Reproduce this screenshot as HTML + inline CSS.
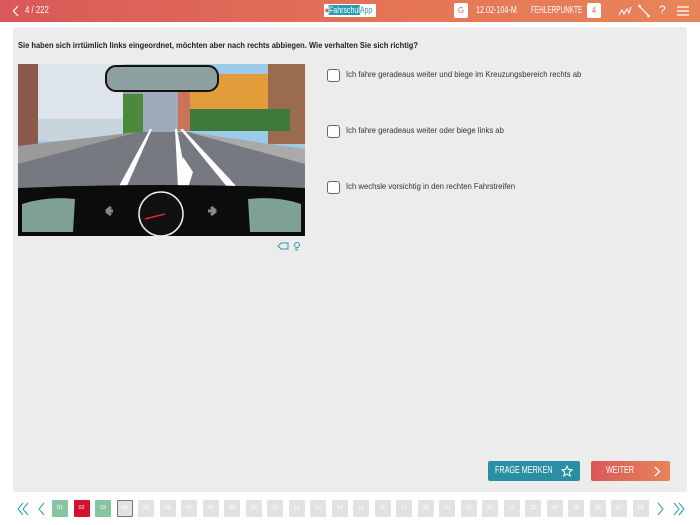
<!DOCTYPE html>
<html><head><meta charset="utf-8"><style>
*{margin:0;padding:0;box-sizing:border-box}
body{width:700px;height:525px;background:#fff;font-family:"Liberation Sans",sans-serif;position:relative;overflow:hidden}
.hdr{position:absolute;left:0;top:0;width:700px;height:22px;background:linear-gradient(90deg,#d9585a,#e57656 60%,#e8845a);color:#fff;font-size:9px}
.a{position:absolute;white-space:nowrap}
.n{transform:scaleX(.78);transform-origin:left top}
.panel{position:absolute;left:13px;top:27px;width:674px;height:465px;background:#ececec;border-radius:3px}
.q{position:absolute;left:18px;top:40px;font-size:8.5px;font-weight:bold;color:#222;white-space:nowrap;transform:scaleX(.885);transform-origin:left top}
.cb{position:absolute;left:327px;width:13px;height:13px;border:1.3px solid #666;border-radius:3px;background:#fff}
.ans{position:absolute;left:346px;font-size:8.2px;color:#333;white-space:nowrap;transform:scaleX(.94);transform-origin:left top}
.pg{position:absolute;top:500px;width:16px;height:17px;background:#e2e2e2;color:#fff;font-size:5.5px;text-align:center;line-height:17px;border-radius:1px}
.btn{position:absolute;top:461px;height:20px;color:#fff;font-size:9px;line-height:20px;border-radius:2px}
</style></head><body>
<div class="hdr">
 <svg class="a" style="left:12px;top:5px" width="8" height="12"><path d="M6 1L1.5 6L6 11" stroke="#fff" stroke-width="1.3" fill="none"/></svg>
 <div class="a n" style="left:25px;top:5px;font-size:10px">4 / 222</div>
 <div class="a" style="left:324px;top:4px;width:52px;height:13px;background:#fff;border-radius:1px;font-size:9px;line-height:13px;color:#2a9bb0;overflow:hidden"><div class="n" style="padding-left:1px;transform:scaleX(.78)"><span style="color:#e55">●</span><span style="background:#2a9bb0;color:#fff">Fahrschul</span>App</div></div>
 <div class="a" style="left:454px;top:3px;width:14px;height:15px;background:#fff;border-radius:2px;color:#e06a58;text-align:center;line-height:15px;font-size:8px">G</div>
 <div class="a n" style="left:476px;top:5px;font-size:10px;transform:scaleX(.72)">12.02-104-M</div>
 <div class="a n" style="left:531px;top:5px;font-size:10px;transform:scaleX(.64)">FEHLERPUNKTE</div>
 <div class="a" style="left:587px;top:3px;width:14px;height:15px;background:#fff;border-radius:2px;color:#e06a58;text-align:center;line-height:15px;font-size:8px">4</div>
 <svg class="a" style="left:618px;top:4px" width="14" height="14"><path d="M1 11L4 6L6 10L9 5L11 9L13 3" stroke="#fff" stroke-width="1.1" fill="none"/></svg>
 <svg class="a" style="left:638px;top:4px" width="12" height="14"><path d="M1 2L11 12" stroke="#fff" stroke-width="1.2"/><circle cx="1.5" cy="2" r="1.3" fill="#fff"/><circle cx="10.5" cy="12" r="1.3" fill="#fff"/></svg>
 <div class="a" style="left:659px;top:3px;font-size:12px">?</div>
 <svg class="a" style="left:677px;top:5px" width="12" height="12"><path d="M0 2H12M0 6H12M0 10H12" stroke="#fff" stroke-width="1.2"/></svg>
</div>
<div class="panel"></div>
<div class="q">Sie haben sich irrtümlich links eingeordnet, möchten aber nach rechts abbiegen. Wie verhalten Sie sich richtig?</div>
<svg class="a" style="left:18px;top:64px" width="287" height="172" viewBox="0 0 287 172">
 <rect width="287" height="172" fill="#9ccbea"/>
 <rect x="0" y="0" width="20" height="82" fill="#8a5a4a"/>
 <rect x="20" y="0" width="85" height="55" fill="#dde4ea"/>
 <rect x="20" y="55" width="85" height="22" fill="#c8d4dc"/>
 <rect x="105" y="25" width="30" height="45" fill="#9aa6b0"/>
 <rect x="105" y="30" width="20" height="40" fill="#4a8a3a"/>
 <rect x="125" y="20" width="35" height="50" fill="#9faabd"/>
 <rect x="160" y="22" width="12" height="45" fill="#c9745a"/>
 <rect x="172" y="10" width="110" height="55" fill="#e29c3a"/>
 <rect x="250" y="0" width="37" height="80" fill="#9b6b50"/>
 <rect x="172" y="45" width="100" height="22" fill="#3f7a3a"/>
 <polygon points="0,85 120,68 170,68 287,95 287,124 0,124" fill="#767a80"/>
 <polygon points="0,82 120,68 0,100" fill="#9a9a9a"/>
 <polygon points="170,68 287,85 287,100" fill="#aaa"/>
 <polygon points="100,124 132,65 134,65 108,124" fill="#fff"/>
 <polygon points="160,124 157,65 159,65 170,124" fill="#fff"/>
 <polygon points="210,124 162,65 165,65 220,124" fill="#fff"/>
 <polygon points="160,124 165,93 175,108 170,124" fill="#fff"/>
 <rect x="88" y="2" width="112" height="25" rx="10" fill="#8fa0a0" stroke="#111" stroke-width="2"/>
 <path d="M0 124 Q143 118 287 124 V172 H0Z" fill="#0c0c0c"/>
 <path d="M4 140 Q30 132 57 135 L55 168 H4Z" fill="#7fa097"/>
 <path d="M230 135 Q260 132 283 140 V168 H232Z" fill="#7fa097"/>
 <circle cx="143" cy="150" r="22" fill="#111" stroke="#eee" stroke-width="1.5"/>
 <path d="M127 155 L147 150" stroke="#e22" stroke-width="1.5"/>
 <path d="M95 147 H88 M88 147 l5 -4 M88 147 l5 4" stroke="#888" stroke-width="3"/>
 <path d="M190 147 H198 M198 147 l-5 -4 M198 147 l-5 4" stroke="#888" stroke-width="3"/>
</svg>
<svg class="a" style="left:277px;top:241px" width="25" height="10"><path d="M1 5L4 2H11V8H4Z" stroke="#2a9bb0" fill="none"/><circle cx="20" cy="4" r="2.5" stroke="#2a9bb0" fill="none"/><path d="M19 7V9H21" stroke="#2a9bb0" fill="none"/></svg>
<div class="cb" style="top:69px"></div><div class="ans" style="top:70px">Ich fahre geradeaus weiter und biege im Kreuzungsbereich rechts ab</div>
<div class="cb" style="top:125px"></div><div class="ans" style="top:126px">Ich fahre geradeaus weiter oder biege links ab</div>
<div class="cb" style="top:181px"></div><div class="ans" style="top:182px">Ich wechsle vorsichtig in den rechten Fahrstreifen</div>
<div class="btn" style="left:488px;width:92px;background:#2a8fa2"><div class="a n" style="left:7px;top:0;font-size:10px;transform:scaleX(.72)">FRAGE MERKEN</div><svg class="a" style="left:73px;top:4px" width="12" height="12"><path d="M6 1L7.5 4.5L11 4.8L8.3 7.2L9.2 11L6 9L2.8 11L3.7 7.2L1 4.8L4.5 4.5Z" stroke="#fff" fill="none"/></svg></div>
<div class="btn" style="left:591px;width:79px;background:linear-gradient(90deg,#d9585a,#e8845a)"><div class="a n" style="left:15px;top:0;font-size:10px;transform:scaleX(.72)">WEITER</div><svg class="a" style="left:62px;top:5px" width="8" height="11"><path d="M2 1L6.5 5.5L2 10" stroke="#fff" stroke-width="1.4" fill="none"/></svg></div>
<svg class="a" style="left:17px;top:502px" width="30" height="14"><path d="M6 1L1 7L6 13M11 1L6 7L11 13" stroke="#2a9bb0" fill="none"/><path d="M27 1L22 7L27 13" stroke="#2a9bb0" fill="none"/></svg>
<svg class="a" style="left:656px;top:502px" width="30" height="14"><path d="M2 1L7 7L2 13M18 1L23 7L18 13M23 1L28 7L23 13" stroke="#2a9bb0" fill="none"/></svg>
<div class="pg" style="left:52px;background:#86c5a0">01</div>
<div class="pg" style="left:73.5px;background:#d3102e">02</div>
<div class="pg" style="left:95px;background:#86c5a0">03</div>
<div class="pg" style="left:116.5px;border:1.3px solid #777;line-height:15px">04</div>
<div class="pg" style="left:138px">05</div><div class="pg" style="left:159.5px">06</div><div class="pg" style="left:181px">07</div><div class="pg" style="left:202.5px">08</div><div class="pg" style="left:224px">09</div><div class="pg" style="left:245.5px">10</div><div class="pg" style="left:267px">11</div><div class="pg" style="left:288.5px">12</div><div class="pg" style="left:310px">13</div><div class="pg" style="left:331.5px">14</div><div class="pg" style="left:353px">15</div><div class="pg" style="left:374.5px">16</div><div class="pg" style="left:396px">17</div><div class="pg" style="left:417.5px">18</div><div class="pg" style="left:439px">19</div><div class="pg" style="left:460.5px">20</div><div class="pg" style="left:482px">21</div><div class="pg" style="left:503.5px">22</div><div class="pg" style="left:525px">23</div><div class="pg" style="left:546.5px">24</div><div class="pg" style="left:568px">25</div><div class="pg" style="left:589.5px">26</div><div class="pg" style="left:611px">27</div><div class="pg" style="left:632.5px">28</div>
</body></html>
